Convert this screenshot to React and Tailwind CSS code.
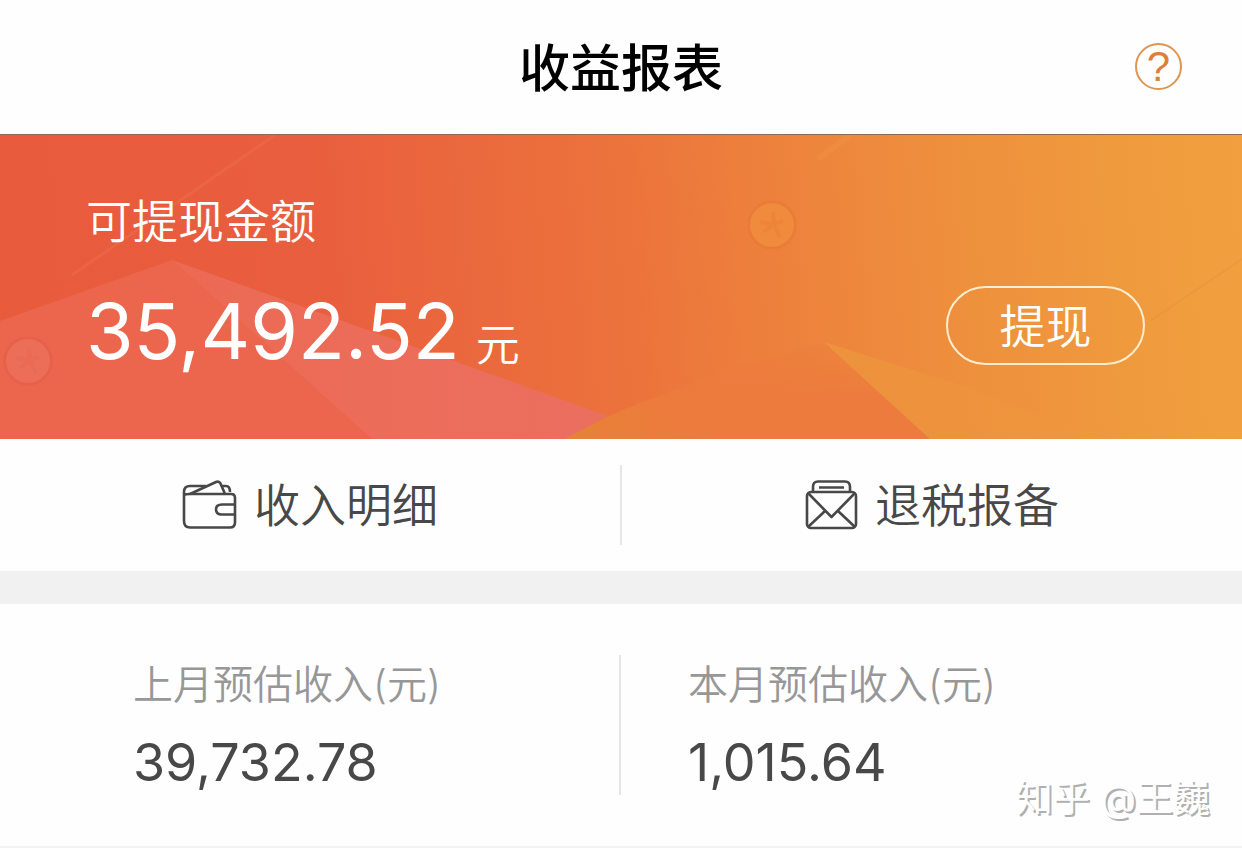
const ACTIONS = [
  { label: "收入明细", href: "#income", Icon: WalletIcon },
  { label: "退税报备", href: "#tax", Icon: EnvelopeIcon },
];

function WalletIcon() {
  return (
    <svg aria-hidden="true" className="h-[50px] w-[56px] shrink-0" viewBox="0 0 56 50" fill="none" stroke="currentColor" strokeWidth="2.6" strokeLinejoin="round">
      <path d="M2 12V41Q2 47.500 8 47.500H48Q53 47.500 53 42.500V18Q53 14 49 14H6M24 6H8Q2 6 2 12V15Q3 14 8 14" />
      <path d="M8 14L34 2Q37 0.800 38.500 3.500L43 14M39 6H44Q48 6 48 12" />
      <path d="M53 24.500H40Q34 24.500 34 29.500Q34 34.500 40 34.500H53" />
    </svg>
  );
}

function EnvelopeIcon() {
  return (
    <svg aria-hidden="true" className="h-[50px] w-[54px] shrink-0" viewBox="0 0 54 50" fill="none" stroke="currentColor" strokeWidth="2.6" strokeLinejoin="round">
      <rect x="2" y="12" width="49" height="36" rx="4" />
      <path d="M8 12V7Q8 1.500 13 1.500H40Q45 1.500 45 7V12M14 7.500H39" />
      <path d="M3 13L26.500 37L50 13M3 47L20 31M50 47L33 31" />
    </svg>
  );
}

function Coin({ x, y, fill, mark }) {
  return (
    <g transform={`translate(${x} ${y})`}>
      <circle r="25" fill={mark} opacity="0.15" />
      <circle r="24" fill={mark} opacity="0.2" />
      <circle r="22" fill={fill} />
      <path d="M1 -13L2 -1L8 12M-12 -3L2 -1L-8 7M2 -1L11 -4" stroke={mark} strokeWidth="4" fill="none" opacity="0.2" />
    </g>
  );
}

function BannerArt() {
  return (
    <svg aria-hidden="true" className="absolute inset-0 h-full w-full" viewBox="0 0 1242 304" preserveAspectRatio="none">
      <defs>
        <linearGradient id="sky" gradientUnits="userSpaceOnUse" x1="0" y1="100" x2="1240" y2="0">
          <stop offset="0" stopColor="#e85b3d" />
          <stop offset="0.25" stopColor="#e95e3e" />
          <stop offset="0.5" stopColor="#ec733c" />
          <stop offset="0.6" stopColor="#ed7f3c" />
          <stop offset="0.78" stopColor="#ee913d" />
          <stop offset="0.94" stopColor="#f09d3e" />
          <stop offset="1" stopColor="#f19f3f" />
        </linearGradient>
        <linearGradient id="fold" x1="0" y1="0" x2="1" y2="0">
          <stop offset="0" stopColor="#ed933c" />
          <stop offset="1" stopColor="#f09c3e" stopOpacity="0" />
        </linearGradient>
        <linearGradient id="hill" x1="0" y1="0" x2="0" y2="1">
          <stop offset="0" stopColor="#ec7b3d" stopOpacity="0.2" />
          <stop offset="0.6" stopColor="#ec7b3d" />
        </linearGradient>
        <linearGradient id="ridge" x1="0" y1="0" x2="1" y2="0">
          <stop offset="0" stopColor="#ec6a54" />
          <stop offset="1" stopColor="#eb6f5f" />
        </linearGradient>
        <linearGradient id="foot" x1="0" y1="0" x2="1" y2="0">
          <stop offset="0" stopColor="#e78334" />
          <stop offset="1" stopColor="#ec7b3d" stopOpacity="0" />
        </linearGradient>
      </defs>
      <rect width="1242" height="304" fill="url(#sky)" />
      <path d="M72 140L275 0" stroke="#ef7051" strokeWidth="3" opacity="0.4" />
      <path d="M818 24L850 0" stroke="#f2a34a" strokeWidth="6" opacity="0.2" />
      <path d="M1150 186L1242 124" stroke="#df8c35" strokeWidth="2" opacity="0.25" />
      <path d="M560 304L640 268L730 234L824 207L930 304Z" fill="url(#hill)" />
      <path d="M824 207L960 250L1100 304H930Z" fill="url(#fold)" />
      <path d="M0 186L172 125L372 304H0Z" fill="#eb664d" />
      <path d="M172 125L608 281L565 304H372Z" fill="url(#ridge)" />
      <path d="M565 304L608 281L640 268L720 304Z" fill="url(#foot)" />
      <Coin x={28} y={226} fill="#ed6e58" mark="#df5844" />
      <Coin x={772} y={90} fill="#f08a3c" mark="#e2722f" />
    </svg>
  );
}

function Stat({ label, value }) {
  return (
    <div>
      <dt className="text-[40px] leading-[60px] font-[350] text-[#979797]">{label}</dt>
      <dd className="mt-4 text-[52px] leading-[64px] text-[#484848]">{value}</dd>
    </div>
  );
}

export default function App() {
  return (
    <main className="bg-[#fefefe] font-['Inter','Noto_Sans_CJK_SC',sans-serif] text-[#484848]">
      <header className="grid grid-cols-[1fr_auto_1fr] items-start border-b border-[#8c6a55] px-[60px] pt-7 pb-6">
        <h1 className="col-start-2 text-[51px] leading-[82px] font-medium text-black">收益报表</h1>
        <button type="button" aria-label="帮助" className="mt-[15px] flex size-[47px] items-center justify-center justify-self-end rounded-full border-2 border-[#dc9650] font-['Liberation_Sans',sans-serif] text-[42px] leading-none text-[#dd7f38]">
          ?
        </button>
      </header>

      <section className="relative overflow-hidden text-white">
        <BannerArt />
        <div className="relative flex items-end justify-between pt-[52px] pr-[97px] pb-[60px] pl-[86px]">
          <div>
            <h2 className="text-[46px] leading-[68px] font-[350]">可提现金额</h2>
            <p className="mt-7 flex items-end gap-4">
              <span className="text-[77px] leading-[96px]">35,492.52</span>
              <span className="text-[44px] leading-[68px] font-[350]">元</span>
            </p>
          </div>
          <button type="button" className="mb-[14px] h-[79px] w-[199px] rounded-full border-2 border-[#ffedd0] text-[46px] leading-none font-[350]">提现</button>
        </div>
      </section>

      <nav className="flex divide-x-2 divide-[#e6e6e6] py-[26px]">
        {ACTIONS.map(({ label, href, Icon }) => (
          <a key={label} href={href} className="flex h-20 flex-1 items-center justify-center gap-4">
            <Icon />
            <span className="text-[46px] leading-none font-[350]">{label}</span>
          </a>
        ))}
      </nav>

      <section className="border-t-[33px] border-[#f1f1f1]">
        <dl className="grid grid-cols-2 divide-x-2 divide-[#e6e6e6] border-b-2 border-[#f3f3f3] pt-[51px] pb-[51px]">
          <div className="pl-[133px]">
            <Stat label="上月预估收入(元)" value="39,732.78" />
          </div>
          <div className="pl-[67px]">
            <Stat label="本月预估收入(元)" value="1,015.64" />
          </div>
        </dl>
      </section>

      <p className="absolute right-8 bottom-6 text-[37px] leading-[54px] text-[#fefefe] [text-shadow:2px_2px_0_#b0b0b0]">知乎 @王巍</p>
    </main>
  );
}
